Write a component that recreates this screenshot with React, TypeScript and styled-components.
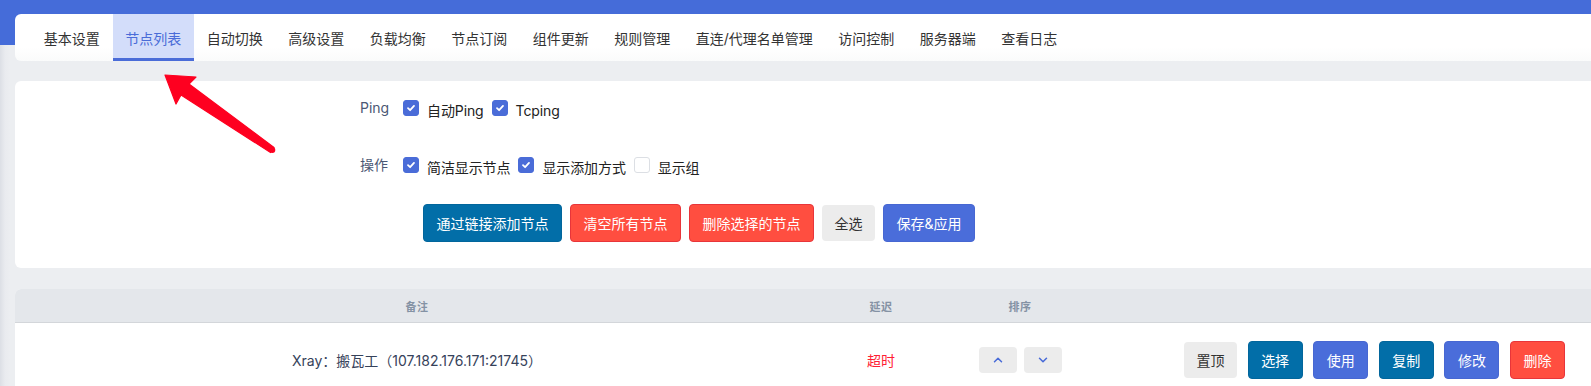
import React from "react";
import styled, { createGlobalStyle, css } from "styled-components";
import { ChevronUp, ChevronDown } from "lucide-react";

const GlobalStyle = createGlobalStyle`
  html, body { margin: 0; padding: 0; }
  body {
    font-family: Inter, "Noto Sans CJK SC", sans-serif;
    background: #eceef1;
    overflow: hidden;
    -webkit-font-smoothing: antialiased;
  }
`;

const Page = styled.div`
  position: relative;
  min-height: 386px;
  background: linear-gradient(to right, #dcdfe5 0px, #e9ebef 5px, #eceef1 10px, #eceef1 100%);
`;

const TopBar = styled.div`
  height: 45px;
  background: #456cd9;
`;

const Main = styled.div`
  margin-top: -31px;
  padding-left: 15px;
  display: flex;
  flex-direction: column;
`;

const TabCard = styled.nav`
  height: 47px;
  display: flex;
  padding-left: 16px;
  background: linear-gradient(#ffffff 0%, #ffffff 70%, #fafbfb 100%);
  border-radius: 6px 0 0 6px;
`;

const Tab = styled.div<{ $active?: boolean }>`
  display: flex;
  align-items: center;
  padding: 0 12.75px;
  font-size: 14px;
  color: #333;
  white-space: nowrap;
  ${(p) =>
    p.$active &&
    css`
      background: #d3ddfa;
      color: #4a6cd8;
      box-shadow: inset 0 -3px 0 #4a6cd8;
    `}
`;

const FormCard = styled.section`
  margin-top: 20px;
  background: #fff;
  border-radius: 6px 0 0 6px;
  padding: 19px 0 26px 345px;
  display: flex;
  flex-direction: column;
`;

const FormRow = styled.div<{ $mt?: number }>`
  display: flex;
  align-items: flex-start;
  margin-top: ${(p) => p.$mt ?? 0}px;
`;

const FormLabel = styled.div`
  width: 43px;
  font-size: 14px;
  line-height: 16px;
  color: #4b5874;
`;

const Checks = styled.div`
  display: flex;
  align-items: flex-start;
  gap: 8px;
`;

const Box = styled.span<{ $checked?: boolean }>`
  width: 16px;
  height: 16px;
  box-sizing: border-box;
  border-radius: 3px;
  display: flex;
  align-items: center;
  justify-content: center;
  background: ${(p) => (p.$checked ? "#4a6cd8" : "#fff")};
  border: 1px solid ${(p) => (p.$checked ? "#4a6cd8" : "#dcdfe4")};
`;

const CheckText = styled.span`
  font-size: 14px;
  line-height: 22px;
  color: #222;
  white-space: nowrap;
  letter-spacing: -0.1px;
`;

const ButtonRow = styled.div`
  display: flex;
  align-items: center;
  gap: 8px;
  margin: 25px 0 0 63px;
`;

type Variant = "teal" | "red" | "gray" | "blue";

const variants: Record<Variant, ReturnType<typeof css>> = {
  teal: css`
    background: #026ea8;
    border: 1px solid #02669c;
    color: #fff;
  `,
  red: css`
    background: #ff4e40;
    border: 1px solid #e8353a;
    color: #fff;
  `,
  blue: css`
    background: #4a6dda;
    border: 1px solid #4767d2;
    color: #fff;
  `,
  gray: css`
    background: #ececec;
    border: none;
    color: #333;
    height: 36px;
  `,
};

const Button = styled.button<{ $v: Variant }>`
  height: 38px;
  box-sizing: border-box;
  padding: 0 12.5px;
  border-radius: 4px;
  font-family: inherit;
  font-size: 14px;
  white-space: nowrap;
  cursor: pointer;
  ${(p) => variants[p.$v]}
`;

const TableCard = styled.section`
  margin-top: 21px;
  background: #fff;
  border-radius: 6px 0 0 0;
  overflow: hidden;
`;

const gridCols = css`
  display: grid;
  grid-template-columns: 804px 124px 154px 1fr;
  align-items: center;
`;

const HeadRow = styled.div`
  ${gridCols};
  height: 34px;
  box-sizing: border-box;
  background: #e4e7eb;
  border-bottom: 1px solid #d3d6da;
`;

const HeadCell = styled.div`
  text-align: center;
  font-size: 11px;
  font-weight: 700;
  letter-spacing: 0.5px;
  color: #8492a4;
`;

const BodyRow = styled.div`
  ${gridCols};
  padding: 18px 0;
`;

const NameCell = styled.div`
  text-align: center;
  font-size: 14px;
  color: #36425a;
`;

const Timeout = styled.div`
  text-align: center;
  font-size: 14px;
  color: #ff1f35;
`;

const SortCell = styled.div`
  display: flex;
  justify-content: center;
  gap: 7px;
`;

const SortBtn = styled.button`
  width: 38px;
  height: 26px;
  border: none;
  border-radius: 4px;
  background: #ececec;
  display: flex;
  align-items: center;
  justify-content: center;
  padding: 0;
  color: #4a6cd8;
`;

const Actions = styled.div`
  display: flex;
  justify-content: flex-end;
  align-items: center;
  gap: 10.6px;
  padding-right: 26px;
`;

const ArrowLayer = styled.svg`
  position: absolute;
  left: 0;
  top: 0;
  pointer-events: none;
`;

const Check = () => (
  <svg width="10" height="10" viewBox="0 0 10 10">
    <path d="M2 5.2 L4.1 7.2 L8 2.9" fill="none" stroke="#fff" strokeWidth="1.8" strokeLinecap="round" strokeLinejoin="round" />
  </svg>
);

const CheckItem = ({ checked, label }: { checked?: boolean; label: string }) => (
  <>
    <Box $checked={checked}>{checked && <Check />}</Box>
    <CheckText>{label}</CheckText>
  </>
);

const tabs = [
  "基本设置",
  "节点列表",
  "自动切换",
  "高级设置",
  "负载均衡",
  "节点订阅",
  "组件更新",
  "规则管理",
  "直连/代理名单管理",
  "访问控制",
  "服务器端",
  "查看日志",
];

export default function App() {
  return (
    <Page>
      <GlobalStyle />
      <TopBar />
      <Main>
        <TabCard>
          {tabs.map((t, i) => (
            <Tab key={t} $active={i === 1}>
              {t}
            </Tab>
          ))}
        </TabCard>

        <FormCard>
          <FormRow>
            <FormLabel>Ping</FormLabel>
            <Checks>
              <CheckItem checked label="自动Ping" />
              <CheckItem checked label="Tcping" />
            </Checks>
          </FormRow>
          <FormRow $mt={35}>
            <FormLabel>操作</FormLabel>
            <Checks>
              <CheckItem checked label="简洁显示节点" />
              <CheckItem checked label="显示添加方式" />
              <CheckItem label="显示组" />
            </Checks>
          </FormRow>
          <ButtonRow>
            <Button $v="teal">通过链接添加节点</Button>
            <Button $v="red">清空所有节点</Button>
            <Button $v="red">删除选择的节点</Button>
            <Button $v="gray">全选</Button>
            <Button $v="blue">保存&amp;应用</Button>
          </ButtonRow>
        </FormCard>

        <TableCard>
          <HeadRow>
            <HeadCell>备注</HeadCell>
            <HeadCell>延迟</HeadCell>
            <HeadCell>排序</HeadCell>
            <HeadCell />
          </HeadRow>
          <BodyRow>
            <NameCell>Xray：搬瓦工（107.182.176.171:21745）</NameCell>
            <Timeout>超时</Timeout>
            <SortCell>
              <SortBtn>
                <ChevronUp size={14} strokeWidth={2.6} />
              </SortBtn>
              <SortBtn>
                <ChevronDown size={14} strokeWidth={2.6} />
              </SortBtn>
            </SortCell>
            <Actions>
              <Button $v="gray">置顶</Button>
              <Button $v="teal">选择</Button>
              <Button $v="blue">使用</Button>
              <Button $v="teal">复制</Button>
              <Button $v="blue">修改</Button>
              <Button $v="red">删除</Button>
            </Actions>
          </BodyRow>
        </TableCard>
      </Main>

      <ArrowLayer width="1591" height="386" viewBox="0 0 1591 386">
        <polygon
          points="165,75 196,77 189,84 274,147.5 270.5,152.5 181,95 176,104"
          fill="#fe0020"
          stroke="#fe0020"
          strokeWidth="1.2"
          strokeLinejoin="round"
        />
        <circle cx="272.3" cy="150" r="3" fill="#fe0020" />
      </ArrowLayer>
    </Page>
  );
}
